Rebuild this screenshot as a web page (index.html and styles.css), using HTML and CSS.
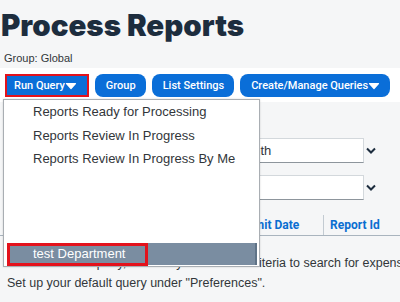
FILE: index.html
```html
<!doctype html>
<html lang="en">
  <head>
    <meta charset="UTF-8" />
    <meta name="viewport" content="width=device-width, initial-scale=1.0" />
    <title>Process Reports</title>
    <link rel="stylesheet" href="styles.css">
  </head>
  <body>
    <header class="page-head">
      <h1 class="title">Process Reports</h1>
      <div class="group-label">Group: Global</div>
    </header>

    <nav class="toolbar">
      <button class="btn btn-marked">Run Query<svg class="caret" viewBox="0 0 12 8"><path d="M1.5 1.5h9L6 6.5z" /></svg></button>
      <button class="btn">Group</button>
      <button class="btn">List Settings</button>
      <button class="btn">Create/Manage Queries<svg class="caret" viewBox="0 0 12 8"><path d="M1.5 1.5h9L6 6.5z" /></svg></button>
    </nav>

    <main class="content">
      <div class="filters">
        <span class="filter-label"></span>
        <div class="select">This Month</div>
        <svg class="chevron" viewBox="0 0 10 7"><path d="M1 1.5l4 4 4-4" /></svg>

        <span class="filter-label"></span>
        <div class="select"></div>
        <svg class="chevron" viewBox="0 0 10 7"><path d="M1 1.5l4 4 4-4" /></svg>
      </div>

      <div class="table-head">
        <div class="th"></div>
        <div class="th">Submit Date</div>
        <div class="th">Report Id</div>
      </div>

      <p class="empty-msg">
        Select a saved query, or enter your search&nbsp; criteria to search for expense reports.<br />
        Set up your default query under "Preferences".
      </p>
    </main>

    <!-- Run Query menu, open -->
    <div class="query-menu">
      <ul class="menu-list">
        <li>Reports Ready for Processing</li>
        <li>Reports Review In Progress</li>
        <li>Reports Review In Progress By Me</li>
      </ul>
      <div class="menu-selected">
        <span class="menu-mark">test Department</span>
      </div>
    </div>
  </body>
</html>
```

FILE: styles.css
```css
body {
  margin: 0;
  position: relative;
  width: 400px;
  height: 302px;
  overflow: hidden;
  background: #f5f6f7;
  font-family: "Liberation Sans", Arial, sans-serif;
  color: #32363a;
}
.page-head {
  padding: 8px 0 3px 1px;
}
.title {
  margin: 0;
  font-family: Inter, "Noto Sans", sans-serif;
  font-weight: 900;
  font-size: 29.5px;
  line-height: 34px;
  color: #1d2d3e;
}
.group-label {
  margin-top: 9px;
  padding-left: 3px;
  font-size: 11px;
  line-height: 14px;
}
.toolbar {
  display: flex;
  gap: 6px;
  height: 34px;
  box-sizing: border-box;
  padding: 6px 5px 5px;
  background: #fff;
}
.btn {
  display: inline-flex;
  align-items: center;
  height: 23px;
  box-sizing: border-box;
  padding: 0 10px 0 11px;
  border: 0;
  border-radius: 8px;
  background: #0a6ed8;
  color: #fff;
  font-family: Roboto, sans-serif;
  font-weight: 500;
  font-size: 11px;
  white-space: nowrap;
}
.btn-marked {
  border: 2px solid #e3121c;
  border-radius: 0;
  padding: 0 10px 0 7px;
}
.caret {
  width: 12px;
  height: 8px;
  fill: #fff;
  stroke: #fff;
  stroke-width: 1.2;
  stroke-linejoin: round;
}
.content {
  padding-top: 36px;
}
.filters {
  display: grid;
  grid-template-columns: 1fr 164px 12px;
  column-gap: 2px;
  row-gap: 12px;
  align-items: center;
  padding-right: 22px;
}
.select {
  height: 25px;
  box-sizing: border-box;
  padding-left: 6px;
  border: 1px solid #d3d8dc;
  border-bottom-color: #8d959c;
  background: #fff;
  font-size: 13px;
  line-height: 23px;
}
.chevron {
  width: 10px;
  height: 7px;
  fill: none;
  stroke: #1d2d3e;
  stroke-width: 2;
}
.table-head {
  display: grid;
  grid-template-columns: 1fr 97px 77px;
  height: 23px;
  box-sizing: border-box;
  margin-top: 13px;
  border-bottom: 1px solid #a9b4be;
}
.th {
  margin-top: 2px;
  padding: 0 6px;
  border-left: 1px solid #c3cbd2;
  font-family: Roboto, sans-serif;
  font-weight: 700;
  font-size: 12px;
  line-height: 20px;
  color: #0a6ed1;
  white-space: nowrap;
}
.th:first-child {
  border-left: 0;
}
.empty-msg {
  margin: 17px 0 0;
  padding: 0 7px;
  font-size: 12.5px;
  line-height: 20px;
  white-space: nowrap;
}
.query-menu {
  position: absolute;
  top: 99px;
  left: 3px;
  width: 257px;
  height: 168px;
  box-sizing: border-box;
  display: flex;
  flex-direction: column;
  border: 1px solid #a9aeb3;
  background: #fff;
  box-shadow: 0 0 2px rgba(0, 0, 0, 0.15);
}
.menu-list {
  margin: 0;
  padding: 0;
  list-style: none;
}
.menu-list li {
  height: 23.5px;
  line-height: 23.5px;
  padding-left: 29px;
  font-size: 13px;
}
.menu-selected {
  margin: auto 2px 1px 3px;
  height: 22px;
  background: #7a8da1;
  border-right: 2px solid #5f7387;
}
.menu-mark {
  display: inline-block;
  width: 141px;
  height: 23px;
  box-sizing: border-box;
  padding-left: 23px;
  border: 3px solid #e3121c;
  color: #fff;
  font-size: 13px;
  line-height: 16px;
}
```
